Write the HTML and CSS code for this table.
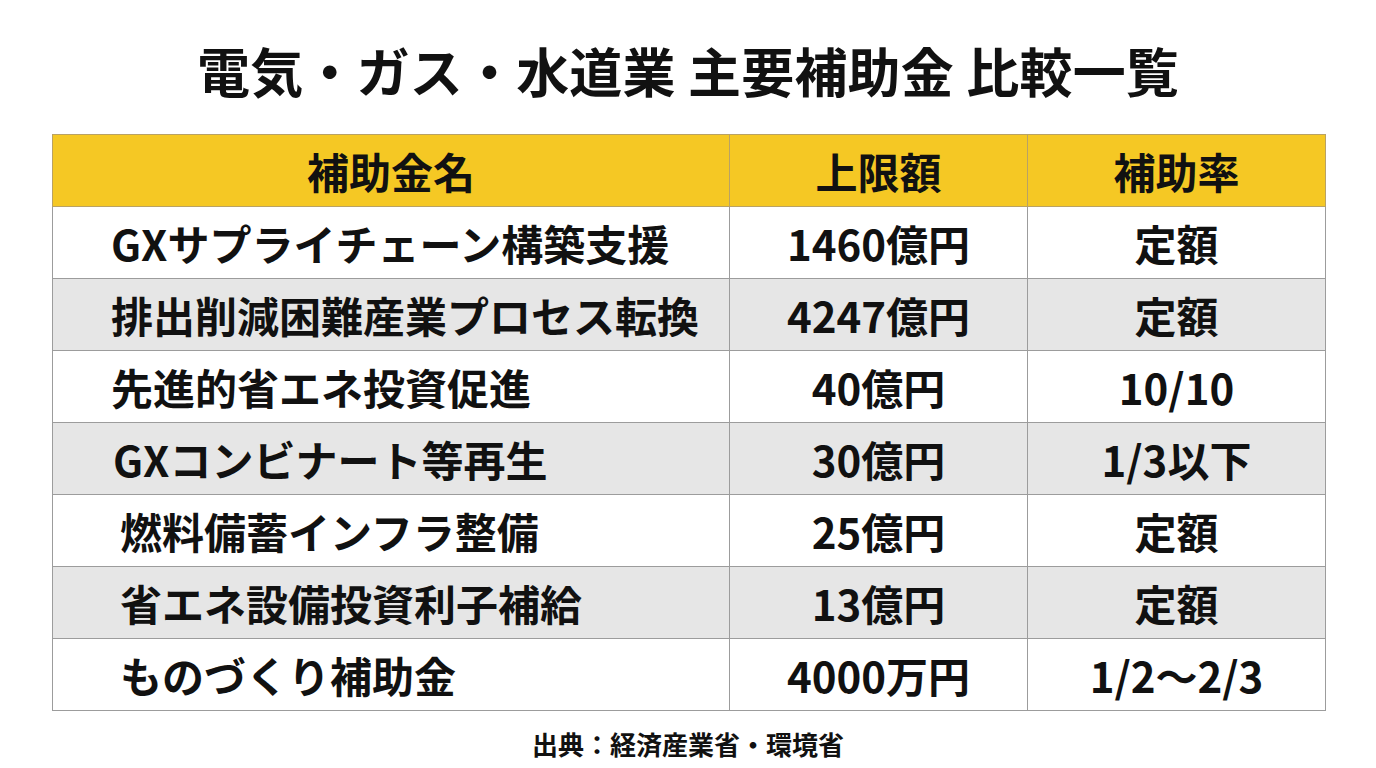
FILE: index.html
```html
<!DOCTYPE html>
<html lang="ja">
<head>
<meta charset="utf-8">
<link rel="stylesheet" href="styles.css">
</head>
<body>
<div class="page">
  <h1 class="title">電気・ガス・水道業 主要補助金 比較一覧</h1>
  <table class="grid">
    <colgroup>
      <col class="c1"><col class="c2"><col class="c3">
    </colgroup>
    <thead>
      <tr><th>補助金名</th><th>上限額</th><th>補助率</th></tr>
    </thead>
    <tbody>
      <tr><td class="name">GXサプライチェーン構築支援</td><td>1460億円</td><td>定額</td></tr>
      <tr class="alt"><td class="name">排出削減困難産業プロセス転換</td><td>4247億円</td><td>定額</td></tr>
      <tr><td class="name">先進的省エネ投資促進</td><td>40億円</td><td>10/10</td></tr>
      <tr class="alt"><td class="name n2">GXコンビナート等再生</td><td>30億円</td><td>1/3以下</td></tr>
      <tr><td class="name n3">燃料備蓄インフラ整備</td><td>25億円</td><td>定額</td></tr>
      <tr class="alt"><td class="name n3">省エネ設備投資利子補給</td><td>13億円</td><td>定額</td></tr>
      <tr><td class="name n3">ものづくり補助金</td><td>4000万円</td><td>1/2～2/3</td></tr>
    </tbody>
  </table>
  <p class="source">出典：経済産業省・環境省</p>
</div>
</body>
</html>
```
FILE: styles.css
```css
html, body {
  margin: 0;
  padding: 0;
  background: #ffffff;
}
body {
  font-family: "Noto Sans CJK JP", "Noto Sans", sans-serif;
  color: #111111;
  width: 1376px;
  height: 768px;
  overflow: hidden;
}
.page {
  display: flex;
  flex-direction: column;
  align-items: center;
}
.title {
  margin: 0;
  height: 128px;
  padding-top: 6px;
  display: flex;
  align-items: center;
  font-size: 53px;
  font-weight: 700;
  letter-spacing: 0.2px;
  line-height: 1;
}
.grid {
  margin-left: 52px;
  align-self: flex-start;
  width: 1273px;
  border-collapse: collapse;
  table-layout: fixed;
}
.c1 { width: 677px; }
.c2 { width: 298px; }
.c3 { width: 298px; }
.grid th, .grid td {
  height: 71px;
  padding: 0;
  border: 1px solid #9c9c9c;
  font-size: 42px;
  font-weight: 700;
  text-align: center;
  line-height: 1;
  white-space: nowrap;
}
.grid th {
  background: #f5c824;
  border-color: #b9a264;
}
.grid tr.alt td {
  background: #e6e6e6;
}
.grid td.name {
  text-align: left;
  padding-left: 58px;
}
.grid td.n2 { padding-left: 60px; }
.grid td.n3 { padding-left: 67px; }
.source {
  margin: 0;
  padding-top: 18px;
  font-size: 26px;
  font-weight: 700;
  line-height: 30px;
}
```
